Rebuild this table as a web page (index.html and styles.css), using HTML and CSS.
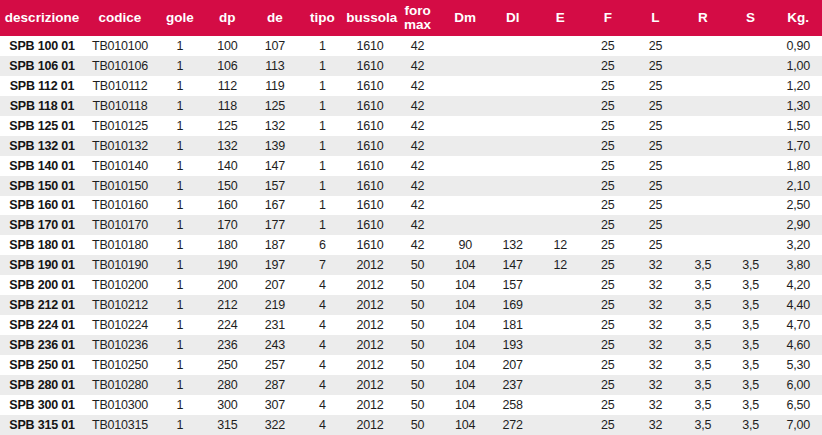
FILE: index.html
```html
<!DOCTYPE html>
<html lang="it">
<head>
<meta charset="utf-8">
<title>SPB</title>
<link rel="stylesheet" href="styles.css">
</head>
<body>
<table class="spec">
<colgroup>
<col class="c-desc"><col class="c-cod">
<col><col><col><col><col><col><col><col><col><col><col><col><col><col>
</colgroup>
<thead>
<tr>
<th>descrizione</th><th>codice</th><th>gole</th><th>dp</th><th>de</th><th>tipo</th><th>bussola</th><th class="two">foro<br>max</th><th>Dm</th><th>Dl</th><th>E</th><th>F</th><th>L</th><th>R</th><th>S</th><th>Kg.</th>
</tr>
</thead>
<tbody>
<tr><td class="d">SPB 100 01</td><td>TB010100</td><td>1</td><td>100</td><td>107</td><td>1</td><td>1610</td><td>42</td><td></td><td></td><td></td><td>25</td><td>25</td><td></td><td></td><td>0,90</td></tr>
<tr><td class="d">SPB 106 01</td><td>TB010106</td><td>1</td><td>106</td><td>113</td><td>1</td><td>1610</td><td>42</td><td></td><td></td><td></td><td>25</td><td>25</td><td></td><td></td><td>1,00</td></tr>
<tr><td class="d">SPB 112 01</td><td>TB010112</td><td>1</td><td>112</td><td>119</td><td>1</td><td>1610</td><td>42</td><td></td><td></td><td></td><td>25</td><td>25</td><td></td><td></td><td>1,20</td></tr>
<tr><td class="d">SPB 118 01</td><td>TB010118</td><td>1</td><td>118</td><td>125</td><td>1</td><td>1610</td><td>42</td><td></td><td></td><td></td><td>25</td><td>25</td><td></td><td></td><td>1,30</td></tr>
<tr><td class="d">SPB 125 01</td><td>TB010125</td><td>1</td><td>125</td><td>132</td><td>1</td><td>1610</td><td>42</td><td></td><td></td><td></td><td>25</td><td>25</td><td></td><td></td><td>1,50</td></tr>
<tr><td class="d">SPB 132 01</td><td>TB010132</td><td>1</td><td>132</td><td>139</td><td>1</td><td>1610</td><td>42</td><td></td><td></td><td></td><td>25</td><td>25</td><td></td><td></td><td>1,70</td></tr>
<tr><td class="d">SPB 140 01</td><td>TB010140</td><td>1</td><td>140</td><td>147</td><td>1</td><td>1610</td><td>42</td><td></td><td></td><td></td><td>25</td><td>25</td><td></td><td></td><td>1,80</td></tr>
<tr><td class="d">SPB 150 01</td><td>TB010150</td><td>1</td><td>150</td><td>157</td><td>1</td><td>1610</td><td>42</td><td></td><td></td><td></td><td>25</td><td>25</td><td></td><td></td><td>2,10</td></tr>
<tr><td class="d">SPB 160 01</td><td>TB010160</td><td>1</td><td>160</td><td>167</td><td>1</td><td>1610</td><td>42</td><td></td><td></td><td></td><td>25</td><td>25</td><td></td><td></td><td>2,50</td></tr>
<tr><td class="d">SPB 170 01</td><td>TB010170</td><td>1</td><td>170</td><td>177</td><td>1</td><td>1610</td><td>42</td><td></td><td></td><td></td><td>25</td><td>25</td><td></td><td></td><td>2,90</td></tr>
<tr><td class="d">SPB 180 01</td><td>TB010180</td><td>1</td><td>180</td><td>187</td><td>6</td><td>1610</td><td>42</td><td>90</td><td>132</td><td>12</td><td>25</td><td>25</td><td></td><td></td><td>3,20</td></tr>
<tr><td class="d">SPB 190 01</td><td>TB010190</td><td>1</td><td>190</td><td>197</td><td>7</td><td>2012</td><td>50</td><td>104</td><td>147</td><td>12</td><td>25</td><td>32</td><td>3,5</td><td>3,5</td><td>3,80</td></tr>
<tr><td class="d">SPB 200 01</td><td>TB010200</td><td>1</td><td>200</td><td>207</td><td>4</td><td>2012</td><td>50</td><td>104</td><td>157</td><td></td><td>25</td><td>32</td><td>3,5</td><td>3,5</td><td>4,20</td></tr>
<tr><td class="d">SPB 212 01</td><td>TB010212</td><td>1</td><td>212</td><td>219</td><td>4</td><td>2012</td><td>50</td><td>104</td><td>169</td><td></td><td>25</td><td>32</td><td>3,5</td><td>3,5</td><td>4,40</td></tr>
<tr><td class="d">SPB 224 01</td><td>TB010224</td><td>1</td><td>224</td><td>231</td><td>4</td><td>2012</td><td>50</td><td>104</td><td>181</td><td></td><td>25</td><td>32</td><td>3,5</td><td>3,5</td><td>4,70</td></tr>
<tr><td class="d">SPB 236 01</td><td>TB010236</td><td>1</td><td>236</td><td>243</td><td>4</td><td>2012</td><td>50</td><td>104</td><td>193</td><td></td><td>25</td><td>32</td><td>3,5</td><td>3,5</td><td>4,60</td></tr>
<tr><td class="d">SPB 250 01</td><td>TB010250</td><td>1</td><td>250</td><td>257</td><td>4</td><td>2012</td><td>50</td><td>104</td><td>207</td><td></td><td>25</td><td>32</td><td>3,5</td><td>3,5</td><td>5,30</td></tr>
<tr><td class="d">SPB 280 01</td><td>TB010280</td><td>1</td><td>280</td><td>287</td><td>4</td><td>2012</td><td>50</td><td>104</td><td>237</td><td></td><td>25</td><td>32</td><td>3,5</td><td>3,5</td><td>6,00</td></tr>
<tr><td class="d">SPB 300 01</td><td>TB010300</td><td>1</td><td>300</td><td>307</td><td>4</td><td>2012</td><td>50</td><td>104</td><td>258</td><td></td><td>25</td><td>32</td><td>3,5</td><td>3,5</td><td>6,50</td></tr>
<tr><td class="d">SPB 315 01</td><td>TB010315</td><td>1</td><td>315</td><td>322</td><td>4</td><td>2012</td><td>50</td><td>104</td><td>272</td><td></td><td>25</td><td>32</td><td>3,5</td><td>3,5</td><td>7,00</td></tr>
</tbody>
</table>
</body>
</html>
```

FILE: styles.css
```css
html, body {
  margin: 0;
  padding: 0;
  background: #ffffff;
}

.spec {
  width: 822px;
  table-layout: fixed;
  border-collapse: collapse;
  border-spacing: 0;
  font-family: "Liberation Sans", Arial, sans-serif;
  color: #1e1e1e;
}

.c-desc { width: 84px; }
.c-cod { width: 72px; }

.spec th {
  background: #d40c45;
  color: #ffffff;
  font-weight: bold;
  font-size: 13.5px;
  letter-spacing: 0;
  height: 36px;
  padding: 0;
  text-align: center;
  vertical-align: middle;
  line-height: 14px;
  white-space: nowrap;
}

.spec td {
  height: 19.95px;
  padding: 0;
  text-align: center;
  vertical-align: middle;
  font-size: 12.5px;
  letter-spacing: -0.2px;
  line-height: 14px;
  white-space: nowrap;
}

.spec tbody tr:nth-child(even) td {
  background: #ececec;
}

.spec td.d {
  font-weight: bold;
  color: #141414;
}
```
